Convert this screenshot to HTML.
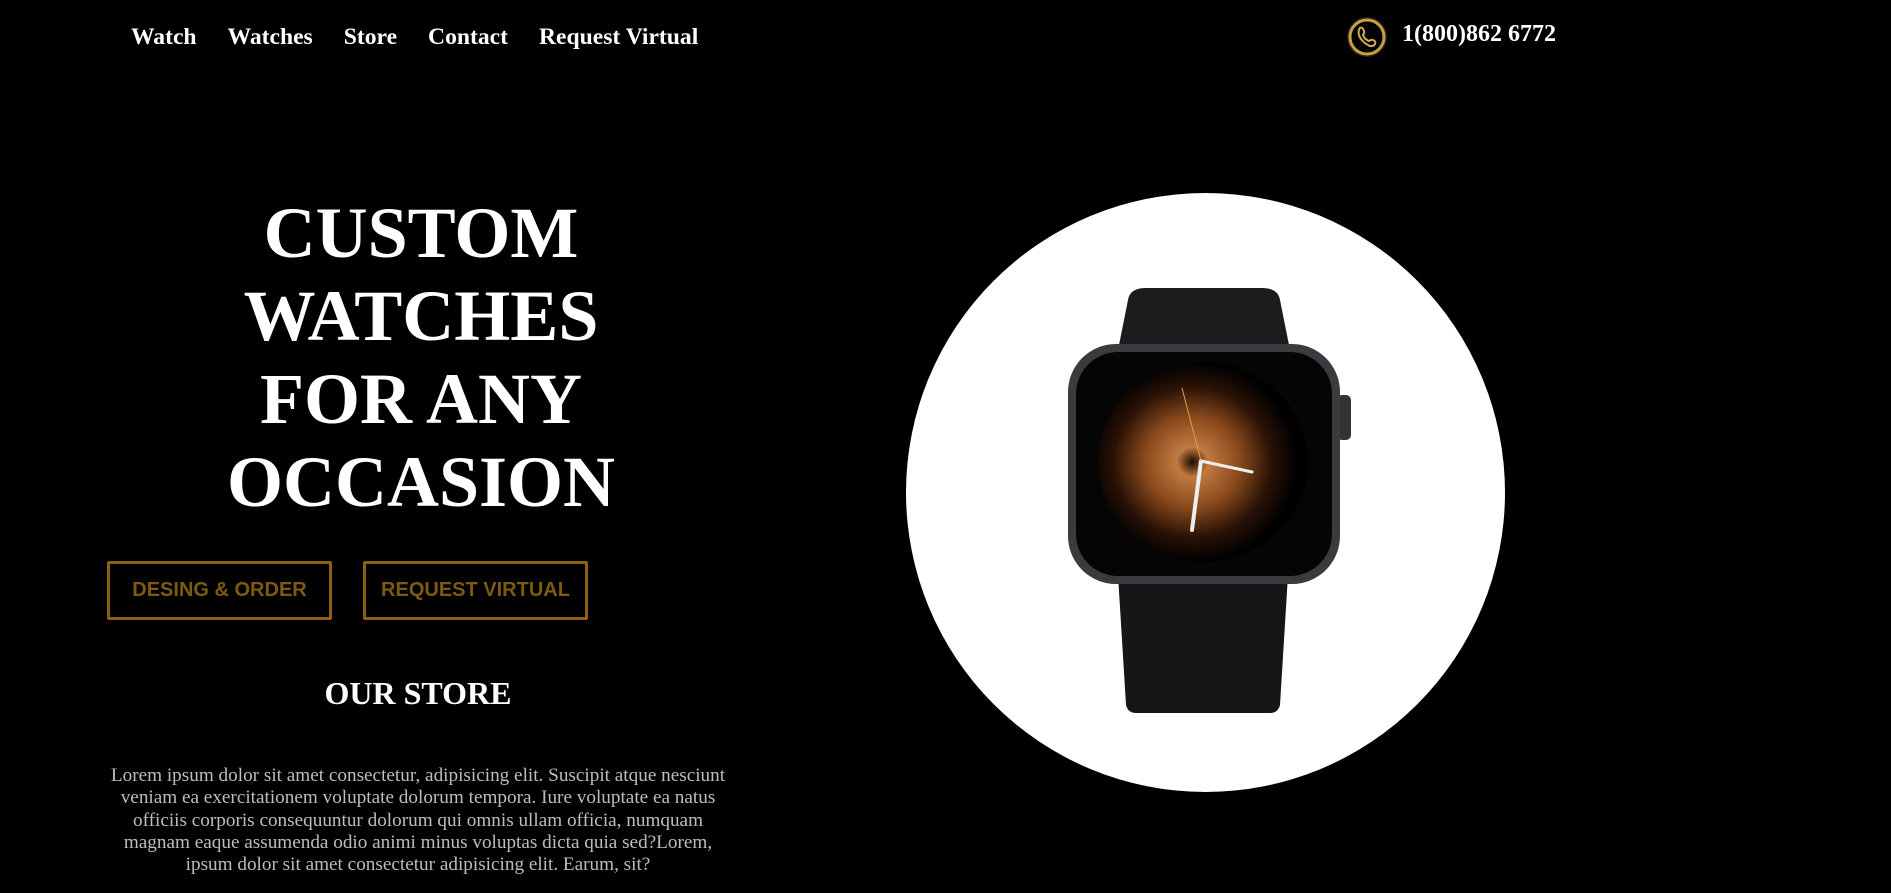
<!DOCTYPE html>
<html><head><meta charset="utf-8"><style>
*{margin:0;padding:0;box-sizing:border-box}
body{width:1891px;height:893px;background:#000;overflow:hidden;position:relative;font-family:"Liberation Serif",serif;color:#fff}
.nav{position:absolute;top:24px;left:131px;display:flex;gap:31px;font-weight:bold;font-size:23.6px}
.phone{position:absolute;left:1402px;top:21px;font-weight:bold;font-size:24px}
h1{position:absolute;left:151px;width:540px;top:192px;text-align:center;font-size:72px;line-height:83px;font-weight:bold}
.btn{position:absolute;top:561px;height:59px;border:3px solid #8a6210;border-radius:2px;color:#7d5a0f;font:bold 20px "Liberation Sans",sans-serif;display:flex;align-items:center;justify-content:center}
h2{position:absolute;left:218px;width:400px;top:675px;text-align:center;font-size:32px;font-weight:bold}
p{position:absolute;left:104px;width:628px;top:765px;text-align:center;font-size:19.2px;line-height:22.3px;color:#bdbdbd}
.circle{position:absolute;left:906px;top:193px;width:599px;height:599px;border-radius:50%;background:#fff;overflow:hidden}
</style></head><body>
<div class="nav"><span>Watch</span><span>Watches</span><span>Store</span><span>Contact</span><span>Request Virtual</span></div>
<svg style="position:absolute;left:1345px;top:15px" width="44" height="44" viewBox="0 0 44 44"><circle cx="22" cy="22" r="20" fill="#222"/><circle cx="22" cy="22" r="17" fill="#000" stroke="#c9a040" stroke-width="3"/><path d="M15 13c2-1 3 0 4 3s-1 3-1 4c1 3 3 5 6 6 1 0 2-2 4-1s3 2 2 4c-1 2-4 3-7 1-4-2-8-6-9-10-1-3 0-6 1-7z" fill="none" stroke="#d4aa50" stroke-width="2"/></svg>
<div class="phone">1(800)862 6772</div>
<h1>CUSTOM<br>WATCHES<br>FOR ANY<br>OCCASION</h1>
<div class="btn" style="left:107px;width:225px">DESING &amp; ORDER</div>
<div class="btn" style="left:363px;width:225px">REQUEST VIRTUAL</div>
<h2>OUR STORE</h2>
<p>Lorem ipsum dolor sit amet consectetur, adipisicing elit. Suscipit atque nesciunt veniam ea exercitationem voluptate dolorum tempora. Iure voluptate ea natus officiis corporis consequuntur dolorum qui omnis ullam officia, numquam magnam eaque assumenda odio animi minus voluptas dicta quia sed?Lorem, ipsum dolor sit amet consectetur adipisicing elit. Earum, sit?</p>
<div class="circle">
<svg width="599" height="599" viewBox="906 193 599 599">
<defs><radialGradient id="f" cx="0.45" cy="0.5" r="0.5"><stop offset="0" stop-color="#1a0a02"/><stop offset="0.15" stop-color="#c07a40"/><stop offset="0.45" stop-color="#8a4a1c"/><stop offset="0.75" stop-color="#2a1206"/><stop offset="1" stop-color="#000"/></radialGradient></defs>
<path d="M1128 300q2-12 18-12h116q16 0 18 12l10 50h-172z" fill="#1b1c1e"/>
<path d="M1118 575h170l-8 130q-2 8-10 8h-134q-8 0-10-8z" fill="#151618"/>
<rect x="1337" y="395" width="14" height="45" rx="5" fill="#333"/>
<rect x="1068" y="344" width="272" height="240" rx="48" fill="#3a3b3e"/>
<rect x="1076" y="352" width="256" height="224" rx="42" fill="#050505"/>
<ellipse cx="1203" cy="462" rx="105" ry="100" fill="url(#f)"/>
<line x1="1201" y1="461" x2="1192" y2="530" stroke="#eee" stroke-width="4" stroke-linecap="round"/>
<line x1="1201" y1="461" x2="1252" y2="472" stroke="#eee" stroke-width="3" stroke-linecap="round"/>
<line x1="1201" y1="461" x2="1182" y2="388" stroke="#e0a040" stroke-width="1"/>
</svg></div>
</body></html>
